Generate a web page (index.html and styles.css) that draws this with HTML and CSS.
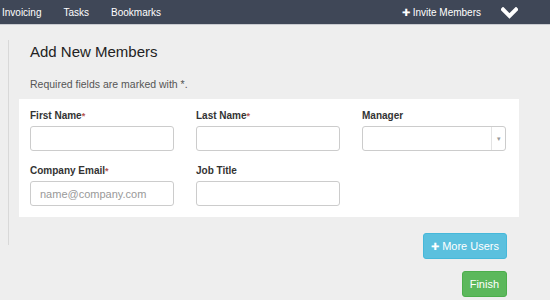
FILE: index.html
```html
<!DOCTYPE html>
<html lang="en">
<head>
  <meta charset="UTF-8">
  <title>Add New Members</title>
  <link rel="stylesheet" href="styles.css">
</head>
<body>
  <nav class="topbar">
    <div class="nav-left">
      <a href="#">Invoicing</a>
      <a href="#">Tasks</a>
      <a href="#">Bookmarks</a>
    </div>
    <div class="nav-right">
      <a href="#" class="invite"><span class="plus">&#10010;</span> Invite Members</a>
      <a href="#" class="chevron">
        <svg width="17" height="12" viewBox="0 0 17 12"><path d="M2 2.5 L8.5 9 L15 2.5" fill="none" stroke="#fff" stroke-width="4" stroke-linecap="square"/></svg>
      </a>
    </div>
  </nav>

  <main class="page">
    <section class="content">
      <h2>Add New Members</h2>
      <p class="note">Required fields are marked with *.</p>

      <form class="panel">
        <div class="grid">
          <div class="field">
            <label>First Name<span class="req">*</span></label>
            <input type="text">
          </div>
          <div class="field">
            <label>Last Name<span class="req">*</span></label>
            <input type="text">
          </div>
          <div class="field">
            <label>Manager</label>
            <div class="select"><span class="arrow">&#9662;</span></div>
          </div>
          <div class="field">
            <label>Company Email<span class="req">*</span></label>
            <input type="text" placeholder="name@company.com">
          </div>
          <div class="field">
            <label>Job Title</label>
            <input type="text">
          </div>
        </div>
      </form>
    </section>

    <div class="actions">
      <button type="button" class="btn btn-info"><span class="plus">&#10010;</span> More Users</button>
      <button type="button" class="btn btn-success">Finish</button>
    </div>
  </main>
</body>
</html>
```

FILE: styles.css
```css
body {
  margin: 0;
  background: #eeeeee;
  font-family: "Liberation Sans", Arial, sans-serif;
  color: #333;
}
.topbar {
  height: 24px;
  background: #3f4757;
  border-bottom: 1px solid #c9cbd0;
  display: flex;
  justify-content: space-between;
  align-items: center;
}
.topbar a {
  color: #fff;
  text-decoration: none;
  font-size: 10px;
}
.nav-left {
  display: flex;
  gap: 22px;
  padding-left: 2px;
}
.nav-right {
  display: flex;
  align-items: center;
  gap: 20px;
  padding-right: 32px;
}
.invite .plus {
  font-size: 10px;
}
.chevron {
  display: flex;
  padding-top: 1px;
}
.page {
  padding: 15px 0 0 8px;
  width: 511px;
}
.content {
  border-left: 1px solid #d8d8d8;
  padding: 0 0 28px 10px;
}
h2 {
  margin: 0;
  padding: 2px 0 0 11px;
  font-size: 15px;
  font-weight: normal;
  color: #222;
  line-height: 20px;
}
.note {
  margin: 16px 0 9px 11px;
  font-size: 10.5px;
  color: #555;
}
.req {
  color: #b8544f;
  font-size: 9px;
  vertical-align: top;
}
.panel {
  background: #fff;
  padding: 11px 11px 11px;
}
.grid {
  display: grid;
  grid-template-columns: repeat(3, 144px);
  column-gap: 22px;
  row-gap: 14px;
}
.field label {
  display: block;
  font-size: 10px;
  font-weight: bold;
  color: #333;
  margin-bottom: 4px;
  line-height: 12px;
}
.field input, .select {
  box-sizing: border-box;
  width: 144px;
  height: 25px;
  border: 1px solid #cccccc;
  border-radius: 3px;
  background: #fff;
  padding: 0 9px;
  font-family: inherit;
  font-size: 11px;
  margin: 0;
}
.field input::placeholder {
  color: #999;
}
.select {
  position: relative;
}
.select .arrow {
  position: absolute;
  right: 0;
  top: 0;
  bottom: 0;
  width: 13px;
  border-left: 1px solid #e3e3e3;
  font-size: 7px;
  color: #999;
  display: flex;
  align-items: center;
  justify-content: center;
}
.actions {
  display: flex;
  flex-direction: column;
  align-items: flex-end;
  gap: 12px;
  margin-top: -12px;
  padding-right: 12px;
}
.btn {
  height: 26px;
  border: 1px solid transparent;
  border-radius: 3px;
  color: #fff;
  font-family: inherit;
  font-size: 11px;
  padding: 0 7px;
  cursor: pointer;
}
.btn .plus {
  font-size: 10px;
}
.btn-info {
  background: #5bc0de;
  border-color: #46b8da;
}
.btn-success {
  background: #5cb85c;
  border-color: #4cae4c;
}
```
